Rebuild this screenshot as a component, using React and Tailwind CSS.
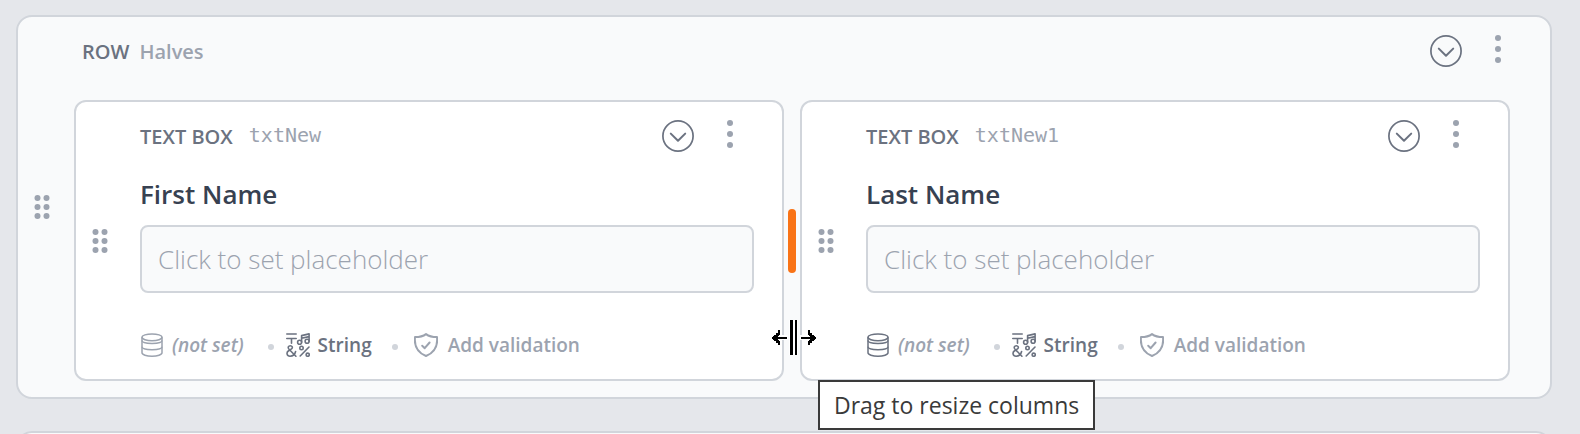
const DragHandle = ({ label, className }) => (
  <button type="button" aria-label={label} className={`shrink-0 cursor-grab text-[#9ca3af] ${className}`}>
    <svg className="h-6 w-4" viewBox="0 0 16 24" fill="currentColor">
      <circle cx="3.5" cy="3" r="3" />
      <circle cx="12.5" cy="3" r="3" />
      <circle cx="3.5" cy="12" r="3" />
      <circle cx="12.5" cy="12" r="3" />
      <circle cx="3.5" cy="21" r="3" />
      <circle cx="12.5" cy="21" r="3" />
    </svg>
  </button>
);

const HeaderActions = () => (
  <div className="flex items-start gap-8">
    <button type="button" aria-label="Collapse" className="text-[#6b7280]">
      <svg className="size-8" viewBox="0 0 32 32" fill="none" stroke="currentColor">
        <circle cx="16" cy="16" r="15.1" strokeWidth="1.7" />
        <path d="M8.8 13.6 16 20.8l7.2-7.2" strokeWidth="2" strokeLinecap="round" strokeLinejoin="round" />
      </svg>
    </button>
    <button type="button" aria-label="More options" className="text-[#9ca3af]">
      <svg className="h-7 w-2" viewBox="0 0 8 28" fill="currentColor">
        <circle cx="4" cy="3" r="3" />
        <circle cx="4" cy="14" r="3" />
        <circle cx="4" cy="25" r="3" />
      </svg>
    </button>
  </div>
);

const DatabaseIcon = ({ className }) => (
  <svg className={`size-6 ${className}`} viewBox="0 0 24 24" fill="none" stroke="currentColor" strokeWidth="1.5">
    <ellipse cx="12" cy="4.3" rx="10" ry="3.4" />
    <path d="M2 4.3v15.500c0 1.900 4.500 3.400 10 3.400s10-1.500 10-3.400V4.300" />
    <path d="M2 7.500c0 1.900 4.500 2.900 10 2.900s10-1 10-2.900M2 13.800c0 1.900 4.500 2.900 10 2.900s10-1 10-2.900" />
  </svg>
);

const StringIcon = () => (
  <svg className="size-6" viewBox="0 0 24 24" fill="none" stroke="currentColor" strokeWidth="1.6" strokeLinecap="round" strokeLinejoin="round">
    <path d="M.8 1h9.400M.8 5.500h9.400M5.500 5.500v4.700" />
    <path d="M15.600 9.300V2.600l7.500-1.700v7.300M15.600 5.300l7.500-1.700" />
    <circle cx="13.600" cy="9.300" r="2" />
    <circle cx="21.100" cy="8.200" r="2" />
    <path d="M9.900 23.200 3 16.200c-1.500-1.700-.6-3.500 1.300-3.500s2.800 1.900 1.200 3.200L2.300 18c-2 1.500-1.700 5.200 1.700 5.200 3 0 5-2 5.600-4.700" />
    <path d="m23 14-8.800 9" />
    <circle cx="15.500" cy="15" r="1.700" />
    <circle cx="21.700" cy="21.700" r="1.600" />
  </svg>
);

const ShieldIcon = () => (
  <svg className="size-6" viewBox="0 0 24 24" fill="none" stroke="currentColor" strokeWidth="2" strokeLinecap="round" strokeLinejoin="round">
    <path d="M12 1.100c2.800 2.100 6.300 3 11 3 .9 8.300-2 15.200-11 18.900C3 19.300.1 12.400 1 4.100c4.700 0 8.200-.9 11-3Z" />
    <path d="m8.200 12.800 2.500 2.400 4.900-5.700" />
  </svg>
);

const Dot = () => <span className="mt-1 size-1.5 rounded-full bg-[#d1d5db]" />;

const TextBoxCard = ({ id, label, dbColor }) => (
  <section className="flex min-w-0 flex-1 items-center rounded-xl border-2 border-[#d1d5db] bg-white pr-7 pl-4">
    <DragHandle label={`Move ${label}`} className="mr-8" />
    <div className="min-w-0 flex-1 py-[18px]">
      <header className="flex justify-between pr-5">
        <h3 className="flex h-8 items-center gap-4 text-xl">
          <span className="pt-0.5 font-semibold text-[#6b7280]">TEXT BOX</span>
          <span className="pb-0.5 font-['DejaVu_Sans_Mono',monospace] text-[#9ca3af]">{id}</span>
        </h3>
        <HeaderActions />
      </header>
      <label htmlFor={id} className="mt-6 block text-[26px] leading-9 font-semibold text-[#374151]">
        {label}
      </label>
      <input
        id={id}
        type="text"
        placeholder="Click to set placeholder"
        className="mt-[13px] block h-[68px] w-full rounded-lg border-2 border-[#d1d5db] bg-[#f9fafb] px-4 text-[26px] font-light placeholder:text-[#9ca3af]"
      />
      <footer className="mt-9 flex h-8 items-center text-[19px] font-semibold text-[#9ca3af]">
        <button type="button" className="mr-6 flex items-center gap-2">
          <DatabaseIcon className={dbColor} />
          <span className="italic">(not set)</span>
        </button>
        <Dot />
        <button type="button" className="mr-5 ml-3 flex items-center gap-2 text-[#6b7280]">
          <StringIcon />
          String
        </button>
        <Dot />
        <button type="button" className="ml-4 flex items-center gap-2.5">
          <ShieldIcon />
          Add validation
        </button>
      </footer>
    </div>
  </section>
);

const ResizeCursor = () => (
  <svg className="absolute top-[220px] -left-3 h-9 w-11" viewBox="0 0 44 36" shapeRendering="crispEdges">
    <path d="M8 15h8v5H8zM28 15h8v5h-8zM17 0h9v35h-9z" fill="#fff" />
    <path d="M18 0h3v35h-3zM23 0h2v35h-2z" />
    <path d="M0 17h15v2H0zM1 16h4v4H1zM2 15h4v6H2zM4 13h3v3H4zM4 20h3v3H4zM6 10h2v5H6zM6 21h2v4H6z" />
    <path d="M29 17h15v2H29zM39 16h4v4h-4zM38 15h4v6h-4zM37 13h3v3h-3zM37 20h3v3h-3zM36 10h2v5h-2zM36 21h2v4h-2z" />
  </svg>
);

const ColumnResizer = () => (
  <div className="relative flex w-4 shrink-0 items-center justify-center">
    <button type="button" aria-label="Resize columns" className="h-16 w-2 cursor-col-resize rounded-full bg-[#f97316]" />
    <ResizeCursor />
    <div role="tooltip" className="absolute top-[280px] left-[34px] z-10 border-2 border-[#3a3a3a] bg-white px-3.5 py-[7px] text-[23px] leading-8 whitespace-nowrap text-[#3a3a3a]">
      Drag to resize columns
    </div>
  </div>
);

const App = () => {
  return (
    <main className="h-screen overflow-hidden bg-[#e5e7eb] pt-[15px] pr-7 pl-4 font-['Open_Sans','Noto_Sans',sans-serif]">
      <section className="flex items-center rounded-2xl border-2 border-[#d1d5db] bg-[#f9fafb] pr-10 pl-4">
        <DragHandle label="Move row" className="mr-6" />
        <div className="min-w-0 flex-1 pt-[18px] pb-4">
          <header className="flex justify-between px-2">
            <h2 className="flex h-8 items-center gap-2.5 pt-0.5 text-xl font-semibold">
              <span className="text-[#6b7280]">ROW</span>
              <span className="text-[#9ca3af]">Halves</span>
            </h2>
            <HeaderActions />
          </header>
          <div className="mt-[33px] flex">
            <TextBoxCard id="txtNew" label="First Name" dbColor="text-[#9ca3af]" />
            <ColumnResizer />
            <TextBoxCard id="txtNew1" label="Last Name" dbColor="text-[#6b7280]" />
          </div>
        </div>
      </section>
      <section className="mt-8 h-24 rounded-2xl border-2 border-[#d1d5db] bg-[#f9fafb]" />
    </main>
  );
};

export default App;
